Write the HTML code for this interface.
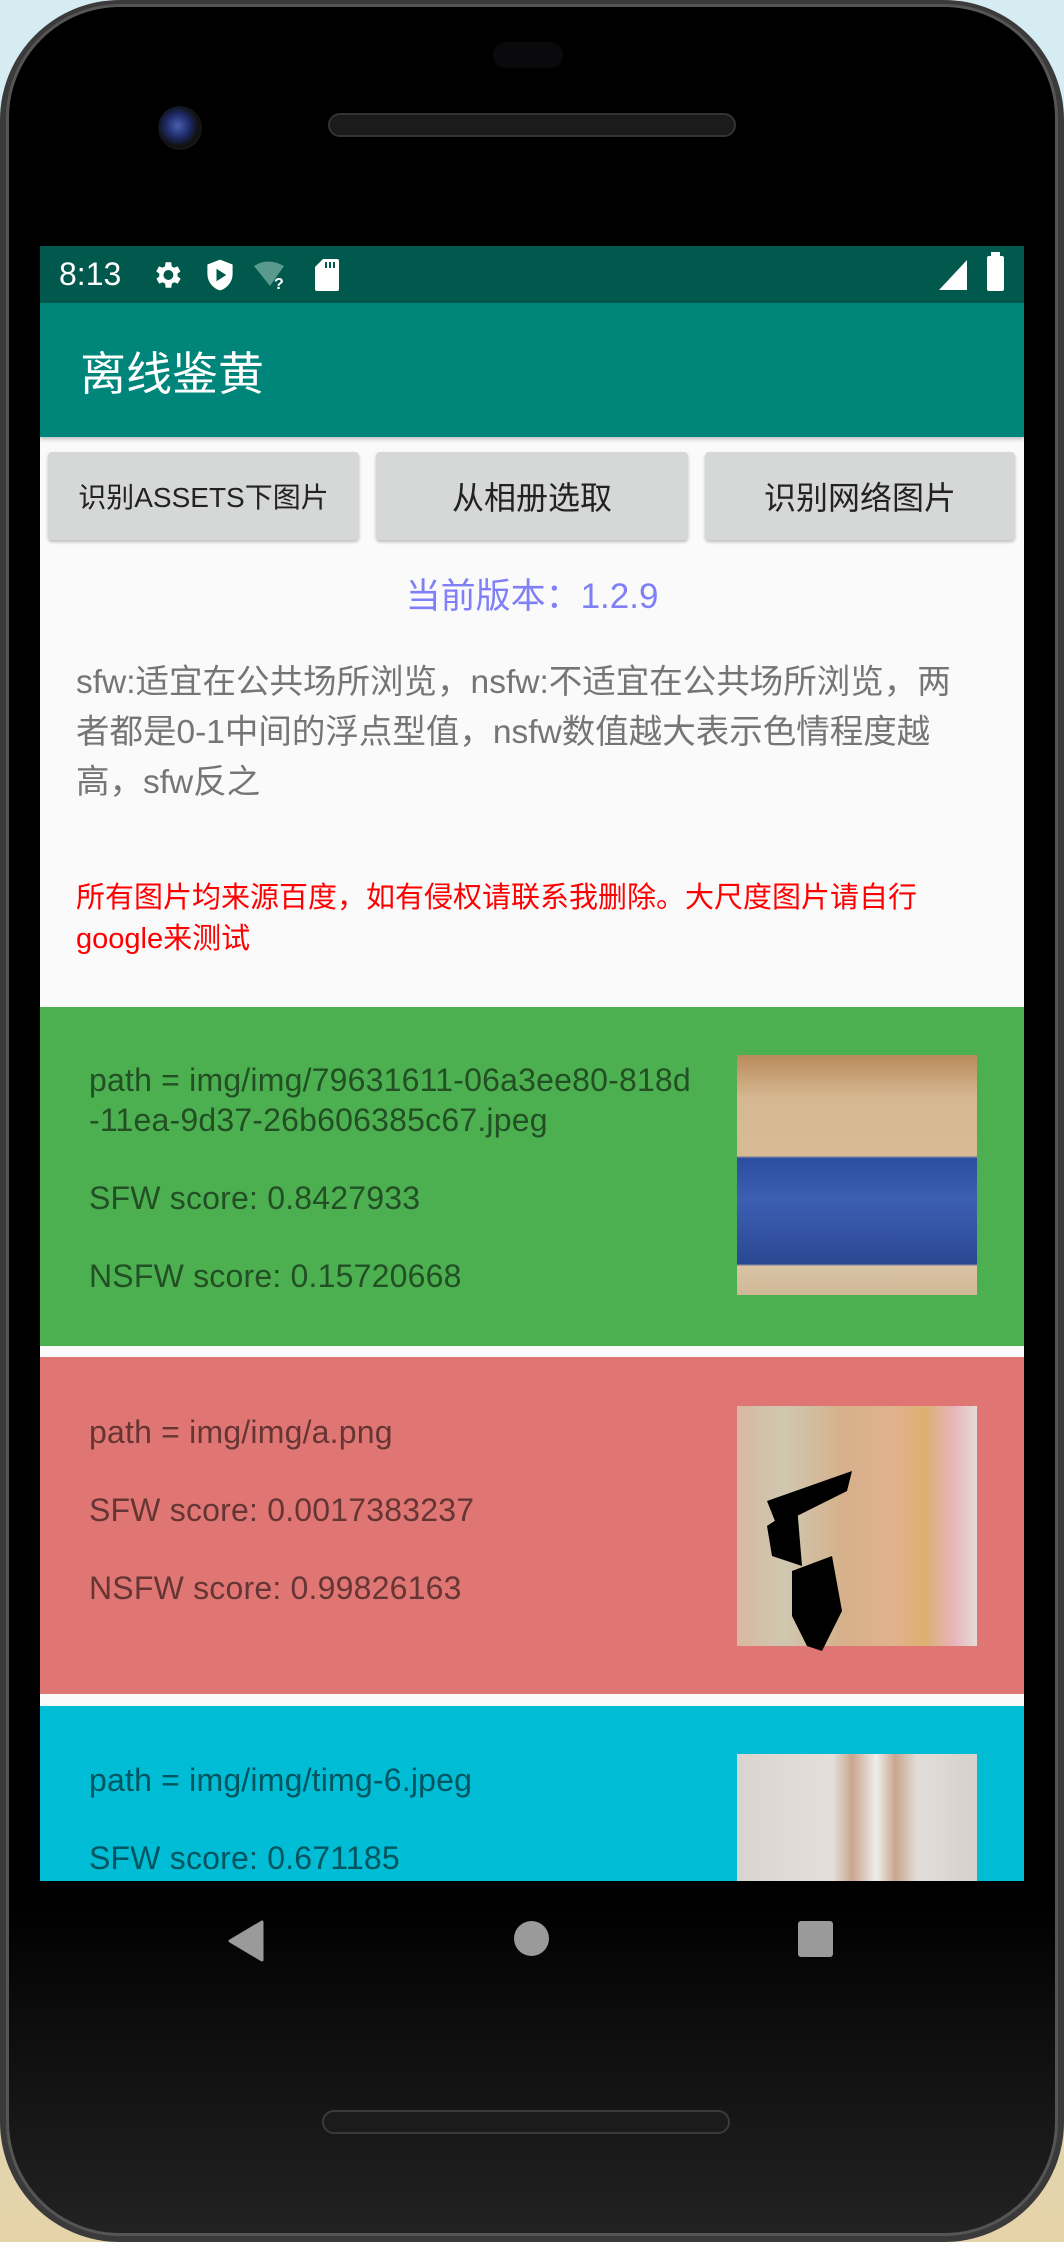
<!DOCTYPE html>
<html><head><meta charset="utf-8"><style>
*{margin:0;padding:0;box-sizing:border-box}
html,body{width:1064px;height:2242px;overflow:hidden}
body{background:linear-gradient(180deg,#d6ecf3 0%,#cfe3ea 60%,#e6d3a8 100%);position:relative;font-family:"Liberation Sans","Noto Sans CJK SC",sans-serif}
.phone{position:absolute;left:0;top:0;width:1064px;height:2242px;border-radius:120px;background:#3a3a3a;}
.phone2{position:absolute;left:6px;top:4px;width:1052px;height:2232px;border-radius:114px;background:linear-gradient(180deg,#000 0%,#000 85%,#222 100%);border:3px solid #555}
.scr{position:absolute;left:40px;top:246px;width:984px;height:1635px;background:#fafafa;overflow:hidden}
.sb{position:absolute;left:0;top:0;width:984px;height:57px;background:#00594c;color:#fff}
.ab{position:absolute;left:0;top:57px;width:984px;height:134px;background:#00857a;color:#fff;font-size:46px;padding:35px 0 0 40px;box-shadow:0 2px 4px rgba(0,0,0,.25)}
.btn{position:absolute;top:206px;height:88px;background:#d6d7d7;border-radius:4px;box-shadow:0 2px 3px rgba(0,0,0,.25);font-size:32px;color:#222;display:flex;align-items:center;justify-content:center;white-space:nowrap}
.ver{position:absolute;top:322px;left:0;width:984px;text-align:center;color:#7f7ff7;font-size:35px}
.desc{position:absolute;left:36px;top:412px;width:960px;font-size:33.5px;line-height:50px;color:#757575;white-space:nowrap}
.red{position:absolute;left:36px;top:632px;width:960px;font-size:29px;line-height:41px;color:#f00;white-space:nowrap}
.card{position:absolute;left:0;width:984px}
.card .t{position:absolute;left:49px;font-size:32px;letter-spacing:.2px;color:rgba(0,0,0,.55);line-height:40px;white-space:nowrap;font-family:"Liberation Sans",sans-serif}
.img{position:absolute;left:697px;width:240px;height:240px;z-index:2}
</style></head><body>
<div class="phone"></div><div class="phone2"></div>
<div style="position:absolute;left:493px;top:42px;width:70px;height:26px;border-radius:13px;background:#0a0a0c"></div>
<div style="position:absolute;left:158px;top:106px;width:44px;height:44px;border-radius:50%;background:radial-gradient(circle at 45% 45%,#4a5fb0 0,#1d2a66 35%,#111 60%,#222 100%)"></div>
<div style="position:absolute;left:328px;top:113px;width:408px;height:24px;border-radius:12px;background:#1b1b1b;border:2px solid #333"></div>
<div style="position:absolute;left:322px;top:2110px;width:408px;height:24px;border-radius:12px;background:#1b1b1b;border:2px solid #3a3a3a"></div>

<div class="scr">
 <div class="sb">
  <div style="position:absolute;left:19px;top:10px;font-size:32px">8:13</div>
  <svg style="position:absolute;left:110px;top:12px" width="34" height="34" viewBox="0 0 24 24"><path fill="#fff" d="M19.4 13a7.5 7.5 0 0 0 0-2l2.1-1.6-2-3.5-2.5 1a7 7 0 0 0-1.7-1L15 3h-4l-.4 2.9a7 7 0 0 0-1.7 1l-2.5-1-2 3.5L6.6 11a7.5 7.5 0 0 0 0 2l-2.1 1.6 2 3.5 2.5-1a7 7 0 0 0 1.7 1L11 21h4l.4-2.9a7 7 0 0 0 1.7-1l2.5 1 2-3.5zM13 15.5A3.5 3.5 0 1 1 13 8.5a3.5 3.5 0 0 1 0 7z"/></svg>
  <svg style="position:absolute;left:166px;top:12px" width="28" height="34" viewBox="0 0 20 24"><path fill="#fff" d="M10 1 1 4.5v6.5c0 6 4 10.5 9 12 5-1.5 9-6 9-12V4.5z"/><path fill="#00594c" d="M7.5 7.5v9l7-4.5z"/></svg>
  <svg style="position:absolute;left:214px;top:14px" width="36" height="30" viewBox="0 0 36 30"><path fill="#5a9a8e" d="M0 6Q14-3 30 6L16 26z"/><text x="20" y="29" fill="#fff" font-size="16" font-weight="bold" font-family="Liberation Sans">?</text></svg>
  <svg style="position:absolute;left:275px;top:13px" width="24" height="32" viewBox="0 0 24 32"><path fill="#fff" d="M8 0h14a2 2 0 0 1 2 2v28a2 2 0 0 1-2 2H2a2 2 0 0 1-2-2V8z"/><rect x="10" y="3" width="2" height="6" fill="#00594c"/><rect x="14" y="3" width="2" height="6" fill="#00594c"/><rect x="18" y="3" width="2" height="6" fill="#00594c"/></svg>
  <svg style="position:absolute;left:899px;top:14px" width="30" height="30" viewBox="0 0 30 30"><path fill="#fff" d="M28 0V30H0z"/></svg>
  <div style="position:absolute;left:947px;top:10px;width:17px;height:35px;background:#fff;border-radius:2px"></div>
  <div style="position:absolute;left:951px;top:6px;width:9px;height:5px;background:#fff"></div>
 </div>
 <div class="ab">离线鉴黄</div>
 <div class="btn" style="left:8px;width:311px;font-size:28px">识别ASSETS下图片</div>
 <div class="btn" style="left:336px;width:312px">从相册选取</div>
 <div class="btn" style="left:665px;width:310px">识别网络图片</div>
 <div class="ver">当前版本：1.2.9</div>
 <div class="desc">sfw:适宜在公共场所浏览，nsfw:不适宜在公共场所浏览，两<br>者都是0-1中间的浮点型值，nsfw数值越大表示色情程度越<br>高，sfw反之</div>
 <div class="red">所有图片均来源百度，如有侵权请联系我删除。大尺度图片请自行<br>google来测试</div>

 <div class="card" style="top:761px;height:339px;background:#4caf50">
  <div class="t" style="top:53px">path = img/img/79631611-06a3ee80-818d<br>-11ea-9d37-26b606385c67.jpeg</div>
  <div class="t" style="top:171px">SFW score: 0.8427933</div>
  <div class="t" style="top:249px">NSFW score: 0.15720668</div>
  <div class="img" style="top:48px;background:linear-gradient(180deg,#b98b5c 0%,#d6b892 18%,#d8bb95 42%,#2c4ea0 43%,#3d5fb2 60%,#2a4793 87%,#d9c4a4 88%,#cfb896 100%)"></div>
 </div>
 <div class="card" style="top:1111px;height:337px;background:#e07674">
  <div class="t" style="top:55px">path = img/img/a.png</div>
  <div class="t" style="top:133px">SFW score: 0.0017383237</div>
  <div class="t" style="top:211px">NSFW score: 0.99826163</div>
  <div class="img" style="top:49px;background:linear-gradient(90deg,#d8b8a0 0%,#cfc7b0 20%,#d6b08a 45%,#e2b28f 65%,#dcb070 78%,#e8b4b8 90%,#e5dcd8 100%)">
   <svg width="240" height="240" viewBox="0 0 240 240" style="position:absolute;left:0;top:0;overflow:visible"><path d="M30 95 L115 65 L110 85 L40 120 Z M30 120 L60 100 L65 160 L35 150 Z M55 165 L95 150 L105 205 L85 245 L70 240 L55 210Z" fill="#000"/></svg>
  </div>
 </div>
 <div class="card" style="top:1460px;height:180px;background:#00bcd4">
  <div class="t" style="top:54px">path = img/img/timg-6.jpeg</div>
  <div class="t" style="top:132px">SFW score: 0.671185</div>
  <div class="img" style="top:48px;background:linear-gradient(90deg,#d9d4cf 0%,#e4dfda 40%,#c9a58e 48%,#eeeeec 58%,#c9a58e 66%,#e2ddd8 75%,#d6d1cc 100%)"></div>
 </div>
</div>

<svg style="position:absolute;left:228px;top:1920px" width="36" height="42" viewBox="0 0 36 42"><path d="M34 2 V40 L2 21Z" fill="#9a9a9a" stroke="#9a9a9a" stroke-width="3" stroke-linejoin="round"/></svg>
<div style="position:absolute;left:514px;top:1921px;width:35px;height:35px;border-radius:50%;background:#9a9a9a"></div>
<div style="position:absolute;left:798px;top:1921px;width:35px;height:36px;border-radius:3px;background:#9a9a9a"></div>
</body></html>
